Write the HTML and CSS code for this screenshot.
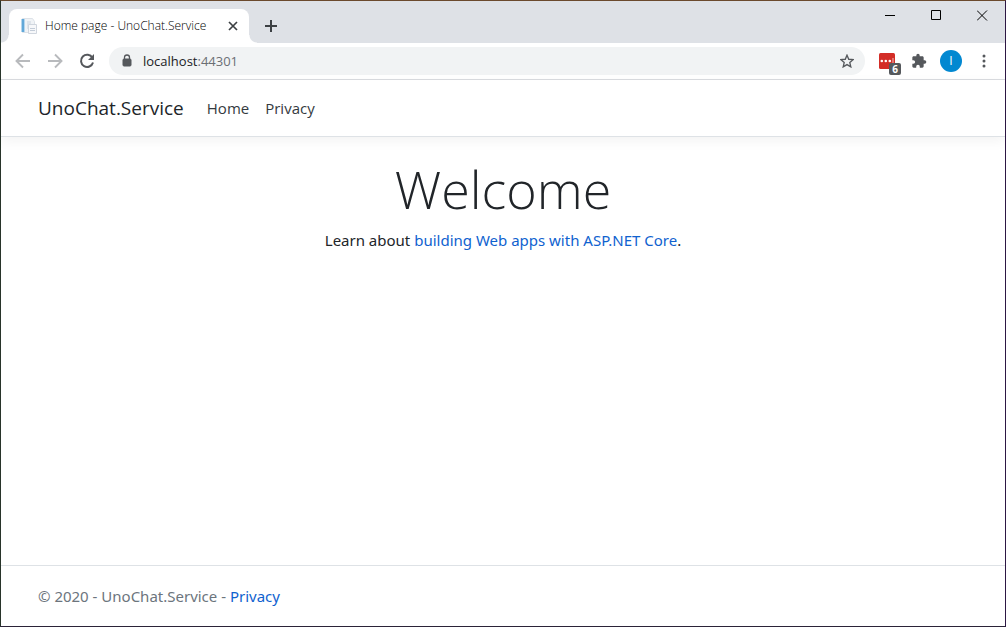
FILE: index.html
```html
<!DOCTYPE html>
<html lang="en">
<head>
<meta charset="utf-8">
<title>Home page - UnoChat.Service</title>
<link rel="stylesheet" href="styles.css">
</head>
<body>
<div class="window">
  <div class="tabstrip">
    <div class="tab">
      <svg class="favicon" width="16" height="16" viewBox="0 0 16 16">
        <path d="M1.500.5h10l2 3v11h-12z" fill="#f0f3f6" stroke="#dde2e8"/>
        <path d="M0 1h4v13H0z" fill="#b5d6ee"/><path d="M1 1h2v13H1z" fill="#62a8d8"/>
        <path d="M6 4h4M6 6h4M6 8h1M6 10h1" stroke="#ccd5df"/>
        <path d="M7.500 6.500h8v9h-8z" fill="#f7f8fa" stroke="#d0d6de"/>
        <path d="M9 10.500h5M9 12.500h5" stroke="#c3ccd8"/>
      </svg>
      <span class="tab-title">Home page - UnoChat.Service</span>
      <button class="plain tab-close" aria-label="Close tab"><svg width="10" height="10" viewBox="0 0 10 10"><path d="M1 1l8 8M9 1l-8 8" stroke="#3c4043" stroke-width="1.700"/></svg></button>
    </div>
    <button class="plain new-tab" aria-label="New tab"><svg width="12" height="12" viewBox="0 0 12 12"><path d="M6 0v12M0 6h12" stroke="#3c4043" stroke-width="2"/></svg></button>
    <div class="window-controls">
      <button class="plain" aria-label="Minimize"><svg width="11" height="11" viewBox="0 0 11 11"><path d="M0 5.500h10" stroke="#000"/></svg></button>
      <button class="plain" aria-label="Maximize"><svg width="11" height="11" viewBox="0 0 11 11"><path d="M.5.5h9v9h-9z" fill="none" stroke="#000"/></svg></button>
      <button class="plain" aria-label="Close"><svg width="11" height="11" viewBox="0 0 11 11"><path d="M0 .5l10 10M10 .5l-10 10" stroke="#000"/></svg></button>
    </div>
  </div>
  <div class="toolbar">
    <button class="plain nav-button" aria-label="Back"><svg width="16" height="16" viewBox="0 0 16 16"><path d="M15 8H2M8 1.500L1.500 8 8 14.500" fill="none" stroke="#b8babd" stroke-width="1.900"/></svg></button>
    <button class="plain nav-button" aria-label="Forward"><svg width="16" height="16" viewBox="0 0 16 16"><path d="M1 8h13M8 1.500L14.500 8 8 14.500" fill="none" stroke="#b8babd" stroke-width="1.900"/></svg></button>
    <button class="plain nav-button" aria-label="Reload"><svg width="16" height="16" viewBox="0 0 16 16"><path d="M13.400 4.800A6.100 6.100 0 1 0 14 9.500" fill="none" stroke="#55585c" stroke-width="2"/><path d="M15 1v6H9z" fill="#55585c"/></svg></button>
    <div class="omnibox">
      <svg width="10" height="14" viewBox="0 0 10 14"><rect x="1" y="5" width="8" height="7" rx="1" fill="#55585c" stroke="#55585c"/><path d="M2.500 5.500V3.500a2.500 2.500 0 0 1 5 0v2" fill="none" stroke="#55585c" stroke-width="1.300"/></svg>
      <span class="url">localhost<span class="port">:44301</span></span>
      <button class="plain star" aria-label="Bookmark"><svg width="14" height="14" viewBox="0 0 24 24"><path d="M12 2l3 7 7.500.7-5.700 5 1.700 7.300L12 18.100 5.500 22l1.700-7.300-5.700-5L9 9z" fill="none" stroke="#55585c" stroke-width="2.300"/></svg></button>
    </div>
    <button class="plain extension" aria-label="Password manager">
      <svg width="16" height="16" viewBox="0 0 16 16"><rect width="16" height="16" rx="1.500" fill="#d32d27"/><circle cx="2.800" cy="8" r="1.300" fill="#fff"/><circle cx="6.800" cy="8" r="1.300" fill="#fff"/><circle cx="10.800" cy="8" r="1.300" fill="#fff"/><path d="M14 5v5" stroke="#fff" stroke-width="1" opacity=".7"/></svg>
      <span class="badge">6</span>
    </button>
    <button class="plain puzzle" aria-label="Extensions"><svg width="16" height="16" viewBox="0 0 24 24"><path d="M20.500 11H19V7c0-1.100-.9-2-2-2h-4V3.500a2.500 2.500 0 0 0-5 0V5H4c-1.100 0-2 .9-2 2v3.800h1.500a2.700 2.700 0 0 1 0 5.400H2V20c0 1.100.9 2 2 2h3.800v-1.500a2.700 2.700 0 0 1 5.400 0V22H17c1.100 0 2-.9 2-2v-4h1.500a2.500 2.500 0 0 0 0-5z" fill="#55585c"/></svg></button>
    <button class="plain avatar" aria-label="Profile">I</button>
    <button class="plain menu" aria-label="Menu"><svg width="4" height="14" viewBox="0 0 4 14"><circle cx="2" cy="2" r="1.500" fill="#55585c"/><circle cx="2" cy="7" r="1.500" fill="#55585c"/><circle cx="2" cy="12" r="1.500" fill="#55585c"/></svg></button>
  </div>
  <header class="site-header">
    <a class="brand" href="#">UnoChat.Service</a>
    <nav class="site-nav"><a href="#">Home</a><a href="#">Privacy</a></nav>
  </header>
  <main class="content">
    <h1>Welcome</h1>
    <p>Learn about <a href="#">building Web apps with ASP.NET Core</a>.</p>
  </main>
  <footer class="site-footer">© 2020 - UnoChat.Service - <a href="#">Privacy</a></footer>
</div>
</body>
</html>
```
FILE: styles.css
```css
* { box-sizing: border-box; }
body {
  margin: 0;
  background: #fff;
  color: #212529;
  font: 15px/24px "Segoe UI", "Open Sans", "Noto Sans", sans-serif;
}
a { color: #0f62cf; text-decoration: none; }
svg { display: block; flex: none; }
.plain {
  display: flex;
  align-items: center;
  justify-content: center;
  flex: none;
  padding: 0;
  border: 0;
  background: none;
  font: inherit;
}
.window {
  display: flex;
  flex-direction: column;
  min-height: 100vh;
  border: 1px solid;
  border-color: #6b4a2d #2d1744 #2b2338 #28342a;
}
.tabstrip {
  display: flex;
  height: 42px;
  padding: 8px 0 0 8px;
  background: #dee1e6;
}
.tab {
  position: relative;
  display: flex;
  align-items: center;
  width: 240px;
  padding: 0 10px 0 12px;
  border-radius: 8px 8px 0 0;
  background: #fff;
}
.tab::before, .tab::after {
  content: "";
  position: absolute;
  bottom: 0;
  width: 8px;
  height: 8px;
}
.tab::before { left: -8px; background: radial-gradient(circle at 0 0, #dee1e6 7px, #fff 8px); }
.tab::after { right: -8px; background: radial-gradient(circle at 100% 0, #dee1e6 7px, #fff 8px); }
.tab-title {
  flex: 1;
  margin-left: 8px;
  color: #000;
  font-size: 12px;
  font-weight: 300;
  white-space: nowrap;
}
.tab-close { width: 12px; height: 16px; }
.new-tab { width: 28px; height: 34px; margin-left: 8px; }
.window-controls { display: flex; margin: -8px 0 0 auto; }
.window-controls .plain { width: 46px; height: 29px; }
.toolbar {
  display: flex;
  align-items: center;
  height: 37px;
  padding: 0 11px 0 6px;
  border-bottom: 1px solid #dadce0;
  background: #fff;
}
.nav-button { width: 32px; height: 32px; }
.omnibox {
  display: flex;
  flex: 1;
  align-items: center;
  height: 28px;
  margin: 0 10px 0 6px;
  padding: 0 10px 0 13px;
  border-radius: 14px;
  background: #f1f3f4;
}
.url { flex: 1; margin-left: 11px; color: #202124; font-size: 13px; }
.port { color: #6b6f74; }
.star { width: 16px; height: 24px; }
.extension { position: relative; width: 24px; height: 24px; }
.badge {
  position: absolute;
  top: 14px;
  left: 14px;
  width: 12px;
  height: 12px;
  border-radius: 2px;
  background: #55585c;
  color: #fff;
  font-size: 10px;
  font-weight: 700;
  line-height: 12px;
}
.puzzle { width: 24px; height: 24px; margin-left: 8px; }
.avatar {
  width: 22px;
  height: 22px;
  margin-left: 9px;
  border-radius: 50%;
  background: #0288d1;
  color: #fff;
  font-size: 12px;
}
.menu { width: 20px; height: 24px; margin-left: 12px; }
.site-header {
  display: flex;
  align-items: center;
  height: 57px;
  padding: 0 37px;
  border-bottom: 1px solid #dee2e6;
  box-shadow: 0 4px 12px rgba(0, 0, 0, .05);
}
.site-header a { color: #343a40; }
.site-header .brand { color: #212529; font-size: 19px; }
.site-nav { display: flex; gap: 16px; margin-left: 23px; }
.content { flex: 1; padding: 20px 38px; text-align: center; }
.content h1 {
  margin: 0 0 8px;
  font-size: 52px;
  font-weight: 300;
  line-height: 63px;
}
.content p { margin: 0; }
.content p, .site-footer { font-family: "Segoe UI", "Noto Sans", "Open Sans", sans-serif; }
.site-footer {
  padding: 18px 37px;
  border-top: 1px solid #dee2e6;
  color: #6c757d;
}
```
